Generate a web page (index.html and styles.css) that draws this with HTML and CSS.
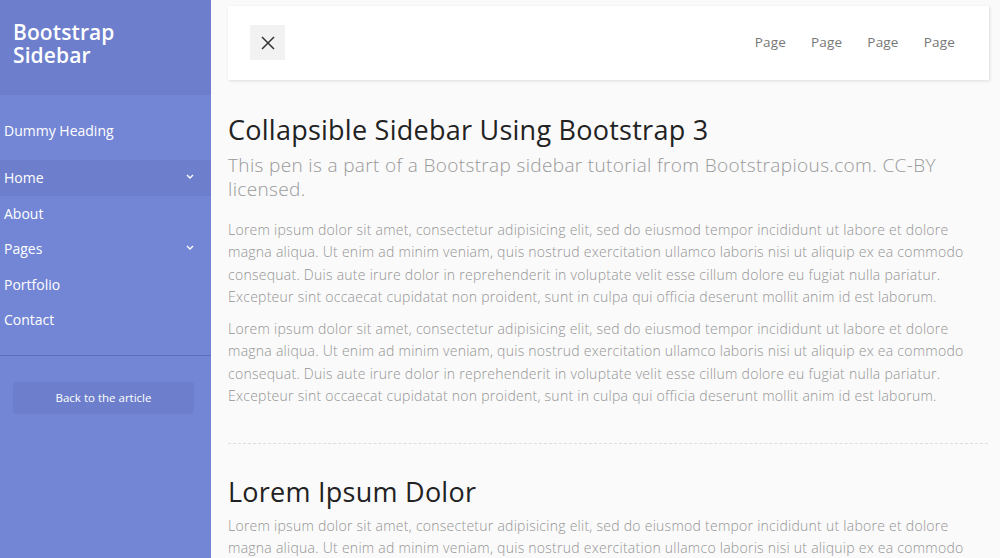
FILE: index.html
```html
<!DOCTYPE html>
<html lang="en">
<head>
<meta charset="utf-8">
<title>Collapsible Sidebar Using Bootstrap 3</title>
<link rel="stylesheet" href="styles.css">
</head>
<body>
<div class="wrapper">
  <nav class="sidebar">
    <div class="sidebar-header">
      <h3>Bootstrap<br>Sidebar</h3>
    </div>
    <ul class="components">
      <li class="heading">Dummy Heading</li>
      <li class="active"><a href="#">Home<svg class="chev" viewBox="0 0 8 5" width="8" height="5"><path d="M1 1l3 3 3-3" fill="none" stroke="#fff" stroke-width="1.4"/></svg></a></li>
      <li><a href="#">About</a></li>
      <li><a href="#">Pages<svg class="chev" viewBox="0 0 8 5" width="8" height="5"><path d="M1 1l3 3 3-3" fill="none" stroke="#fff" stroke-width="1.4"/></svg></a></li>
      <li><a href="#">Portfolio</a></li>
      <li><a href="#">Contact</a></li>
    </ul>
    <div class="cta">
      <a href="#" class="article">Back to the article</a>
    </div>
  </nav>
  <main class="content">
    <header class="navbar">
      <button class="toggle" type="button" aria-label="Close sidebar">
        <svg viewBox="0 0 14 14" width="14" height="14"><path d="M1 1L13 13M13 1L1 13" stroke="#333" stroke-width="1.5" fill="none"/></svg>
      </button>
      <ul class="nav-links">
        <li><a href="#">Page</a></li>
        <li><a href="#">Page</a></li>
        <li><a href="#">Page</a></li>
        <li><a href="#">Page</a></li>
      </ul>
    </header>
    <h2 class="title">Collapsible Sidebar Using Bootstrap 3</h2>
    <p class="lead">This pen is a part of a Bootstrap sidebar tutorial from Bootstrapious.com. CC-BY<br>licensed.</p>
    <p class="text">Lorem ipsum dolor sit amet, consectetur adipisicing elit, sed do eiusmod tempor incididunt ut labore et dolore<br>magna aliqua. Ut enim ad minim veniam, quis nostrud exercitation ullamco laboris nisi ut aliquip ex ea commodo<br>consequat. Duis aute irure dolor in reprehenderit in voluptate velit esse cillum dolore eu fugiat nulla pariatur.<br>Excepteur sint occaecat cupidatat non proident, sunt in culpa qui officia deserunt mollit anim id est laborum.</p>
    <p class="text second">Lorem ipsum dolor sit amet, consectetur adipisicing elit, sed do eiusmod tempor incididunt ut labore et dolore<br>magna aliqua. Ut enim ad minim veniam, quis nostrud exercitation ullamco laboris nisi ut aliquip ex ea commodo<br>consequat. Duis aute irure dolor in reprehenderit in voluptate velit esse cillum dolore eu fugiat nulla pariatur.<br>Excepteur sint occaecat cupidatat non proident, sunt in culpa qui officia deserunt mollit anim id est laborum.</p>
    <div class="line"></div>
    <h2 class="title sub">Lorem Ipsum Dolor</h2>
    <p class="text tight">Lorem ipsum dolor sit amet, consectetur adipisicing elit, sed do eiusmod tempor incididunt ut labore et dolore<br>magna aliqua. Ut enim ad minim veniam, quis nostrud exercitation ullamco laboris nisi ut aliquip ex ea commodo<br>consequat. Duis aute irure dolor in reprehenderit in voluptate velit esse cillum dolore eu fugiat nulla pariatur.</p>
  </main>
</div>
</body>
</html>
```

FILE: styles.css
```css
* { box-sizing: border-box; }
html, body { margin: 0; padding: 0; height: 100%; overflow: hidden; }
body {
  font-family: "Open Sans", "Noto Sans", sans-serif;
  background: #fafafa;
  color: #222;
}
a { text-decoration: none; color: inherit; }
ul { list-style: none; margin: 0; padding: 0; }

.wrapper { display: flex; height: 558px; }

.sidebar {
  width: 211px;
  flex: 0 0 211px;
  background: #7386d5;
  color: #fff;
  display: flex;
  flex-direction: column;
}
.sidebar-header {
  background: #6d7fcc;
  height: 95px;
  padding: 21px 13px 0;
}
.sidebar-header h3 {
  margin: 0;
  font-size: 21px;
  line-height: 23px;
  font-weight: 600;
  letter-spacing: 0.1px;
}
.components {
  padding: 17px 0;
  border-bottom: 1px solid #5b6cbd;
}
.components .heading {
  padding: 10px 4px 10px;
  line-height: 18px;
  font-size: 14px;
  margin-bottom: 10px;
}
.components li a {
  display: flex;
  align-items: center;
  justify-content: space-between;
  height: 35.5px;
  padding: 0 17px 0 4px;
  font-size: 14px;
  font-weight: 500;
}
.components li.active a { background: #6d7fcc; }
.chev { margin-top: -3px; }

.cta { padding: 26px 17px 0 13px; }
.article {
  display: flex;
  align-items: center;
  justify-content: center;
  height: 32px;
  background: #6d7fcc;
  border-radius: 3px;
  font-size: 11.5px;
}

.content {
  flex: 1;
  padding: 6px 11px 0 17px;
  min-width: 0;
}
.navbar {
  height: 74px;
  background: #fff;
  box-shadow: 1px 1px 3px rgba(0,0,0,0.12);
  display: flex;
  align-items: center;
  justify-content: space-between;
  padding: 0 34px 0 22px;
}
.toggle {
  width: 35px;
  height: 35px;
  border: 0;
  background: #f2f2f2;
  display: flex;
  align-items: center;
  justify-content: center;
  padding: 0;
  margin-top: -1px;
}
.nav-links { display: flex; gap: 25px; margin-bottom: 5px; }
.nav-links a { font-size: 13.5px; color: #777; letter-spacing: 0.2px; }

.title {
  margin: 35px 0 8px;
  font-size: 27px;
  line-height: 30px;
  font-weight: 500;
  letter-spacing: 0.25px;
  color: #222;
}
.lead {
  margin: 0 0 18px;
  font-size: 19px;
  line-height: 24px;
  font-weight: 300;
  letter-spacing: 0.35px;
  color: #999;
}
.text {
  margin: 0;
  font-size: 14px;
  line-height: 22.4px;
  font-weight: 300;
  letter-spacing: 0.26px;
  color: #949494;
  white-space: nowrap;
}
.text.second { margin-top: 9.4px; }
.line {
  margin-top: 35px;
  width: 760px;
  border-bottom: 1px dashed #ddd;
}
.title.sub { margin: 33px 0 8px; }
```
